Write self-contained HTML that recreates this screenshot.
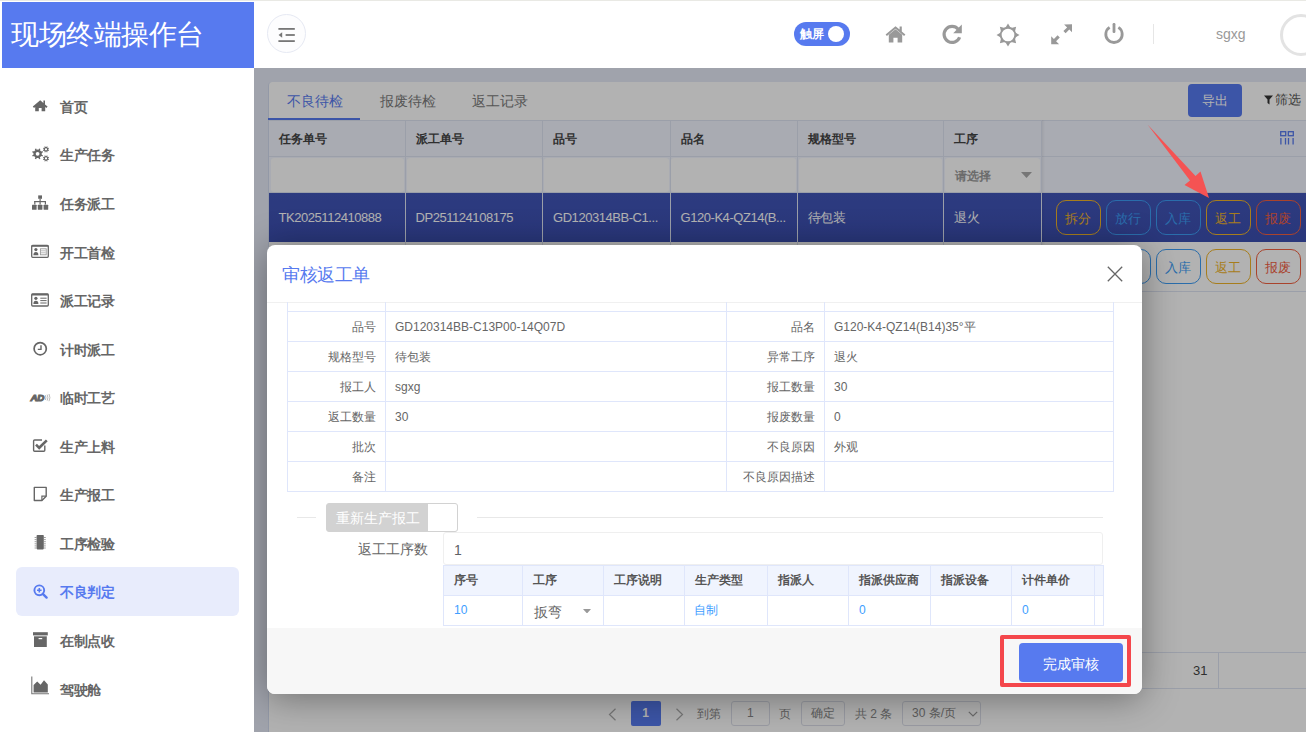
<!DOCTYPE html>
<html><head><meta charset="utf-8">
<style>
*{box-sizing:border-box;margin:0;padding:0}
html,body{width:1306px;height:732px;overflow:hidden;background:#fff;font-family:"Liberation Sans",sans-serif;}
.abs{position:absolute}
#topline{left:0;top:0;width:1306px;height:1px;background:#e9e9e4}
#side{left:0;top:1px;width:254px;height:731px;background:#fff}
#logo{left:2px;top:1px;width:252px;height:66px;background:#577aef;color:#fff;font-size:28px;letter-spacing:-0.5px;line-height:66px;padding-left:9px;white-space:nowrap}
.mi{position:absolute;left:0;width:254px;height:49px;}
.mi .t{position:absolute;left:60px;top:-0.3px;line-height:49px;font-size:14px;letter-spacing:-0.45px;font-weight:bold;color:#666;white-space:nowrap}
.mi svg{position:absolute;left:33px;top:17px}
.mi.on .bg{position:absolute;left:16px;top:-2px;width:223px;height:49px;background:#e8ecfc;border-radius:6px}
.mi.on .t{color:#577aef}
#hdr{left:254px;top:1px;width:1052px;height:67px;background:#fff}
#content{left:254px;top:68px;width:1052px;height:664px;background:#e5eaf7;overflow:hidden}
#mask{left:254px;top:68px;width:1052px;height:664px;background:rgba(0,0,0,0.3)}
.btn{width:45px;height:35px;border:1.3px solid;border-radius:10px;font-size:13px;line-height:35.5px;text-align:center}
.lbl{height:30px;line-height:33px;font-size:12px;color:#666;text-align:right;padding-right:9px;white-space:nowrap}
.val{height:30px;line-height:33px;font-size:12px;color:#666;padding-left:10px;white-space:nowrap}
</style></head>
<body>
<div id="topline" class="abs"></div>
<div id="side" class="abs">
  <div id="logo" class="abs">现场终端操作台</div>
<div class="mi" style="top:82.0px"><div class="t">首页</div></div>
<div class="mi" style="top:130.5px"><div class="t">生产任务</div></div>
<div class="mi" style="top:179.0px"><div class="t">任务派工</div></div>
<div class="mi" style="top:228.0px"><div class="t">开工首检</div></div>
<div class="mi" style="top:276.5px"><div class="t">派工记录</div></div>
<div class="mi" style="top:325.0px"><div class="t">计时派工</div></div>
<div class="mi" style="top:373.5px"><div class="t">临时工艺</div></div>
<div class="mi" style="top:422.2px"><div class="t">生产上料</div></div>
<div class="mi" style="top:470.5px"><div class="t">生产报工</div></div>
<div class="mi" style="top:519.5px"><div class="t">工序检验</div></div>
<div class="mi on" style="top:567.5px"><div class="bg"></div><div class="t">不良判定</div></div>
<div class="mi" style="top:616.5px"><div class="t">在制点收</div></div>
<div class="mi" style="top:665.5px"><div class="t">驾驶舱</div></div>
</div>
<svg class="abs" style="left:0;top:0;z-index:2" width="254" height="732" viewBox="0 0 254 732">
<g fill="#666">
<path d="M40.2 100.3 L32.8 106.6 L34 107.9 L40.2 102.7 L46.4 107.9 L47.6 106.6 L45 104.4 V100.6 H43.4 V103 Z M35.2 106.7 V111.2 H38.8 V108 H41.6 V111.2 H45.2 V106.7 L40.2 102.6 Z"/>
</g>
<g fill="#666" fill-rule="evenodd">
<path d="M41.80 153.80 L41.70 154.72 L43.01 155.24 L42.44 156.61 L41.15 156.05 L40.57 156.77 L39.85 157.35 L40.41 158.64 L39.04 159.21 L38.52 157.90 L37.60 158.00 L36.68 157.90 L36.16 159.21 L34.79 158.64 L35.35 157.35 L34.63 156.77 L34.05 156.05 L32.76 156.61 L32.19 155.24 L33.50 154.72 L33.40 153.80 L33.50 152.88 L32.19 152.36 L32.76 150.99 L34.05 151.55 L34.63 150.83 L35.35 150.25 L34.79 148.96 L36.16 148.39 L36.68 149.70 L37.60 149.60 L38.52 149.70 L39.04 148.39 L40.41 148.96 L39.85 150.25 L40.57 150.83 L41.15 151.55 L42.44 150.99 L43.01 152.36 L41.70 152.88 Z M39.50 153.80 A1.9 1.9 0 1 0 35.70 153.80 A1.9 1.9 0 1 0 39.50 153.80 Z"/>
<path d="M48.30 149.30 L48.24 149.80 L49.09 150.12 L48.77 150.91 L47.94 150.53 L47.63 150.93 L47.23 151.24 L47.61 152.07 L46.82 152.39 L46.50 151.54 L46.00 151.60 L45.50 151.54 L45.18 152.39 L44.39 152.07 L44.77 151.24 L44.37 150.93 L44.06 150.53 L43.23 150.91 L42.91 150.12 L43.76 149.80 L43.70 149.30 L43.76 148.80 L42.91 148.48 L43.23 147.69 L44.06 148.07 L44.37 147.67 L44.77 147.36 L44.39 146.53 L45.18 146.21 L45.50 147.06 L46.00 147.00 L46.50 147.06 L46.82 146.21 L47.61 146.53 L47.23 147.36 L47.63 147.67 L47.94 148.07 L48.77 147.69 L49.09 148.48 L48.24 148.80 Z M47.10 149.30 A1.1 1.1 0 1 0 44.90 149.30 A1.1 1.1 0 1 0 47.10 149.30 Z"/>
<path d="M48.30 158.40 L48.24 158.90 L49.09 159.22 L48.77 160.01 L47.94 159.63 L47.63 160.03 L47.23 160.34 L47.61 161.17 L46.82 161.49 L46.50 160.64 L46.00 160.70 L45.50 160.64 L45.18 161.49 L44.39 161.17 L44.77 160.34 L44.37 160.03 L44.06 159.63 L43.23 160.01 L42.91 159.22 L43.76 158.90 L43.70 158.40 L43.76 157.90 L42.91 157.58 L43.23 156.79 L44.06 157.17 L44.37 156.77 L44.77 156.46 L44.39 155.63 L45.18 155.31 L45.50 156.16 L46.00 156.10 L46.50 156.16 L46.82 155.31 L47.61 155.63 L47.23 156.46 L47.63 156.77 L47.94 157.17 L48.77 156.79 L49.09 157.58 L48.24 157.90 Z M47.10 158.40 A1.1 1.1 0 1 0 44.90 158.40 A1.1 1.1 0 1 0 47.10 158.40 Z"/>
</g>
<g fill="#666">
<rect x="38.2" y="195.4" width="3.8" height="3.4"/><rect x="39.5" y="198.8" width="1.2" height="2.6"/>
<rect x="34.2" y="201" width="11.8" height="1.2"/><rect x="34.2" y="201" width="1.2" height="3.5"/><rect x="39.5" y="201" width="1.2" height="3.5"/><rect x="44.8" y="201" width="1.2" height="3.5"/>
<rect x="32" y="204.8" width="4.6" height="5" rx="0.5"/><rect x="37.8" y="204.8" width="4.6" height="5" rx="0.5"/><rect x="43.6" y="204.8" width="4.6" height="5" rx="0.5"/>
</g>
<g>
<rect x="31.7" y="245.3" width="16.6" height="12" rx="1" fill="none" stroke="#666" stroke-width="1.3"/><rect x="31.7" y="245" width="16.6" height="1.8" fill="#666"/>
<circle cx="35.9" cy="249.6" r="1.6" fill="#666"/><path d="M33.4 255.2 q0-3.2 2.5-3.2 q2.5 0 2.5 3.2z" fill="#666"/>
<rect x="40.4" y="248.8" width="5.8" height="6" fill="none" stroke="#999" stroke-width="0.9"/><path d="M41 250.8 H45.6 M41 252.8 H45.6" stroke="#aaa" stroke-width="0.8"/>
</g>
<g>
<rect x="31.7" y="294" width="16.6" height="12" rx="1" fill="none" stroke="#666" stroke-width="1.3"/><rect x="31.7" y="293.7" width="16.6" height="1.8" fill="#666"/>
<circle cx="35.9" cy="298.3" r="1.6" fill="#666"/><path d="M33.4 303.9 q0-3.2 2.5-3.2 q2.5 0 2.5 3.2z" fill="#666"/>
<path d="M40.3 298.2 H46.6 M40.3 300.6 H46.6 M40.3 303 H46.6" stroke="#666" stroke-width="1"/>
</g>
<g>
<circle cx="40.2" cy="348.7" r="6.1" fill="none" stroke="#666" stroke-width="1.7"/>
<path d="M41 345.2 V349.4 H37.8" fill="none" stroke="#666" stroke-width="1.4"/>
</g>
<g>
<text x="30.6" y="400.8" font-family="Liberation Sans" font-weight="bold" font-style="italic" font-size="9" fill="#666" stroke="#666" stroke-width="1" letter-spacing="-0.3" textLength="13.5" lengthAdjust="spacingAndGlyphs">AD</text>
<path d="M45.4 395.2 q1 2.4 0 4.8 M47.2 394.6 q1.4 3 0 6 M49 394 q1.8 3.6 0 7.2" fill="none" stroke="#aaa" stroke-width="0.8"/>
</g>
<g>
<path d="M44.8 445.5 V450.2 Q44.8 451.2 43.8 451.2 H34.6 Q33.6 451.2 33.6 450.2 V441 Q33.6 440 34.6 440 H42" fill="none" stroke="#666" stroke-width="1.4"/>
<path d="M36 444.6 L39.2 447.8 L46.8 440.4" fill="none" stroke="#666" stroke-width="2.6"/>
</g>
<g>
<path d="M34.3 487.4 H46.2 V496.2 L41.9 500.5 H34.3 Z" fill="none" stroke="#666" stroke-width="1.4" stroke-linejoin="round"/>
<path d="M41.9 500.5 V496.2 H46.2" fill="none" stroke="#666" stroke-width="1.2"/>
</g>
<g fill="#666">
<rect x="36.6" y="535" width="7.2" height="14.4" rx="0.8"/>
<path d="M34.6 537.5 h2 M34.6 539.6 h2 M34.6 541.7 h2 M34.6 543.8 h2 M34.6 545.9 h2 M34.6 548 h2 M43.8 537.5 h2 M43.8 539.6 h2 M43.8 541.7 h2 M43.8 543.8 h2 M43.8 545.9 h2 M43.8 548 h2" stroke="#888" stroke-width="0.8"/>
</g>
<g>
<circle cx="39.3" cy="590.3" r="4.9" fill="none" stroke="#577aef" stroke-width="1.9"/><path d="M42.8 593.8 L46.6 597.6" stroke="#577aef" stroke-width="2.4" stroke-linecap="round"/><path d="M39.3 588 V592.6 M37 590.3 H41.6" stroke="#577aef" stroke-width="1.6"/>
</g>
<g fill="#666">
<rect x="33" y="632.2" width="14.8" height="3.2"/><path d="M34 636.3 H46.8 V647 H34 Z"/><rect x="38.6" y="638" width="3.6" height="1.2" fill="#fff"/>
</g>
<g>
<path d="M31.8 676.5 V693.8 H49" fill="none" stroke="#777" stroke-width="1.1"/>
<path d="M33.6 692.4 V685 L37.2 681.6 L40.6 684.8 L44 680.2 L47.8 684.5 V692.4 Z" fill="#666"/>
</g>
</svg>
<div id="hdr" class="abs">
  <div class="abs" style="left:13px;top:13px;width:39px;height:39px;border:1px solid #e6e9f3;border-radius:50%;background:#fdfdfe"></div>
  <svg class="abs" style="left:24px;top:26px" width="18" height="15" viewBox="0 0 18 15"><g fill="#777"><rect x="0.4" y="1" width="16.4" height="1.8"/><rect x="7.6" y="7.1" width="9.2" height="1.8"/><rect x="0.4" y="13.2" width="16.4" height="1.8"/><path d="M0.6 8 L4.2 5.3 V10.7 Z"/></g></svg>
  <div class="abs" style="left:540px;top:21px;width:56px;height:24px;background:#577aef;border-radius:12px"></div>
  <div class="abs" style="left:546px;top:21px;line-height:24px;font-size:12px;font-weight:bold;color:#fff">触屏</div>
  <div class="abs" style="left:574px;top:24.8px;width:16px;height:16px;background:#fff;border-radius:50%"></div>
  <svg class="abs" style="left:631px;top:23px" width="21" height="19" viewBox="0 0 21 19"><path fill="#999" d="M10.5 2.2 L0.6 10.4 L1.9 11.9 L10.5 4.8 L19.1 11.9 L20.4 10.4 L16.8 7.4 V2.4 H14.6 V5.6 Z M3.8 10.8 V18.6 H8.4 V13.8 H12.6 V18.6 H17.2 V10.8 L10.5 5.3 Z"/></svg>
  <svg class="abs" style="left:687px;top:22px" width="22" height="22" viewBox="0 0 22 22"><path d="M17.2 6.2 A8 8 0 1 0 18.6 14.2" fill="none" stroke="#999" stroke-width="3.2"/><path d="M20.8 1.6 V10.2 H12.2 Z" fill="#999"/></svg>
  <svg class="abs" style="left:742px;top:21.5px" width="24" height="24" viewBox="0 0 24 24"><path fill="#999" d="M12.00 0.50 L14.60 4.80 L9.40 4.80 Z M20.13 3.87 L18.93 8.75 L15.25 5.07 Z M23.50 12.00 L19.20 14.60 L19.20 9.40 Z M20.13 20.13 L15.25 18.93 L18.93 15.25 Z M12.00 23.50 L9.40 19.20 L14.60 19.20 Z M3.87 20.13 L5.07 15.25 L8.75 18.93 Z M0.50 12.00 L4.80 9.40 L4.80 14.60 Z M3.87 3.87 L8.75 5.07 L5.07 8.75 Z"/><circle cx="12" cy="12" r="7.3" fill="none" stroke="#999" stroke-width="1.9"/></svg>
  <svg class="abs" style="left:796.5px;top:23px" width="22" height="21" viewBox="0 0 22 21"><g fill="#999"><path d="M21 0.3 V8.3 L18.3 5.6 L14.6 9.3 L12.4 7.1 L16.1 3.4 L13.1 0.4 Z"/><path d="M0.2 20.3 V12.3 L2.9 15 L6.6 11.3 L8.8 13.5 L5.1 17.2 L8.1 20.2 Z"/></g></svg>
  <svg class="abs" style="left:849px;top:21px" width="22" height="23" viewBox="0 0 22 23"><path d="M6.6 5.4 A8.2 8.2 0 1 0 15.4 5.4" fill="none" stroke="#999" stroke-width="2.8"/><rect x="9.6" y="1" width="2.8" height="10" rx="1.2" fill="#999"/></svg>
  <div class="abs" style="left:898.5px;top:23px;width:1.5px;height:19.5px;background:#e6e6e6"></div>
  <div class="abs" style="left:962px;top:23px;line-height:20px;font-size:14px;color:#999">sgxg</div>
  <div class="abs" style="left:1025.5px;top:13px;width:42px;height:42px;border:3px solid #e3e3e3;border-radius:50%"></div>
</div>
<div id="content" class="abs">
<div class="abs" style="left:14px;top:13.5px;width:1100px;height:700px;background:#fff;border-radius:4px;border-left:1px solid #d3dbf0"></div>
<div class="abs" style="left:33px;top:24px;line-height:20px;font-size:13.6px;color:#577aef;white-space:nowrap">不良待检</div>
<div class="abs" style="left:125.5px;top:24px;line-height:20px;font-size:13.6px;color:#7a7a7a;white-space:nowrap">报废待检</div>
<div class="abs" style="left:217.5px;top:24px;line-height:20px;font-size:13.6px;color:#7a7a7a;white-space:nowrap">返工记录</div>
<div class="abs" style="left:14px;top:50px;width:92px;height:2px;background:#577aef"></div>
<div class="abs" style="left:933.5px;top:15.5px;width:54.5px;height:33px;background:#577aef;border-radius:4px;color:#fff;font-size:13px;line-height:33px;text-align:center">导出</div>
<svg class="abs" style="left:1009.5px;top:27px" width="9" height="10" viewBox="0 0 9 10"><path d="M0 0.5 H9 L5.5 4.5 V9.5 L3.5 8 V4.5 Z" fill="#333"/></svg>
<div class="abs" style="left:1021px;top:22px;line-height:20px;font-size:13px;color:#555">筛选</div>
<div class="abs" style="left:15px;top:52px;width:1040px;height:36.5px;background:#f2f5ff;border-top:1px solid #dfe4f3;border-bottom:1px solid #dfe4f3"></div>
<div class="abs" style="left:15px;top:88.5px;width:1040px;height:35.5px;background:#f2f5ff"></div>
<div class="abs" style="left:16.5px;top:89.6px;width:133.5px;height:34px;background:#fff;border-radius:3px"></div>
<div class="abs" style="left:152.5px;top:89.6px;width:135.0px;height:34px;background:#fff;border-radius:3px"></div>
<div class="abs" style="left:290.0px;top:89.6px;width:124.5px;height:34px;background:#fff;border-radius:3px"></div>
<div class="abs" style="left:417.0px;top:89.6px;width:125.0px;height:34px;background:#fff;border-radius:3px"></div>
<div class="abs" style="left:544.5px;top:89.6px;width:143.5px;height:34px;background:#fff;border-radius:3px"></div>
<div class="abs" style="left:690.5px;top:89.6px;width:95.5px;height:34px;background:#fff;border-radius:3px"></div>
<div class="abs" style="left:15px;top:124px;width:1040px;height:1px;background:#dfe4f3"></div>
<div class="abs" style="left:15px;top:124.7px;width:1040px;height:49.3px;background:linear-gradient(#4155b8,#3c4fb0)"></div>
<div class="abs" style="left:15px;top:223px;width:1040px;height:1px;background:#dfe4f3"></div>
<div class="abs" style="left:151px;top:52px;width:1px;height:172px;background:#dfe4f3"></div>
<div class="abs" style="left:288px;top:52px;width:1px;height:172px;background:#dfe4f3"></div>
<div class="abs" style="left:415.5px;top:52px;width:1px;height:172px;background:#dfe4f3"></div>
<div class="abs" style="left:543px;top:52px;width:1px;height:172px;background:#dfe4f3"></div>
<div class="abs" style="left:689px;top:52px;width:1px;height:172px;background:#dfe4f3"></div>
<div class="abs" style="left:787px;top:52px;width:1px;height:172px;background:#dfe4f3"></div>
<div class="abs" style="left:788px;top:52px;width:3px;height:172px;background:linear-gradient(90deg,rgba(0,0,0,0.06),rgba(0,0,0,0))"></div>
<div class="abs" style="left:25px;top:60.5px;line-height:20px;font-size:12px;font-weight:bold;color:#444">任务单号</div>
<div class="abs" style="left:161.5px;top:60.5px;line-height:20px;font-size:12px;font-weight:bold;color:#444">派工单号</div>
<div class="abs" style="left:299.0px;top:60.5px;line-height:20px;font-size:12px;font-weight:bold;color:#444">品号</div>
<div class="abs" style="left:426.5px;top:60.5px;line-height:20px;font-size:12px;font-weight:bold;color:#444">品名</div>
<div class="abs" style="left:553.5px;top:60.5px;line-height:20px;font-size:12px;font-weight:bold;color:#444">规格型号</div>
<div class="abs" style="left:700.0px;top:60.5px;line-height:20px;font-size:12px;font-weight:bold;color:#444">工序</div>
<svg class="abs" style="left:1025.5px;top:62.5px" width="14" height="14" viewBox="0 0 14 14"><g fill="none" stroke="#577aef" stroke-width="1.3"><rect x="0.7" y="0.7" width="5" height="4"/><rect x="8.3" y="0.7" width="5" height="4"/><path d="M0.9 7 V13.4 M5.5 7 V13.4 M8.5 7 V13.4 M13.1 7 V13.4"/></g></svg>
<div class="abs" style="left:701px;top:98px;line-height:20px;font-size:12px;font-weight:bold;color:#9a9a9a">请选择</div>
<svg class="abs" style="left:767px;top:104px" width="11" height="6" viewBox="0 0 11 6"><path d="M0 0 H11 L5.5 6 Z" fill="#aaa"/></svg>
<div class="abs" style="left:24.5px;top:139.5px;line-height:20px;font-size:13px;color:#fff;white-space:nowrap;letter-spacing:-0.45px">TK2025112410888</div>
<div class="abs" style="left:161.5px;top:139.5px;line-height:20px;font-size:13px;color:#fff;white-space:nowrap;letter-spacing:-0.45px">DP251124108175</div>
<div class="abs" style="left:299.0px;top:139.5px;line-height:20px;font-size:13px;color:#fff;white-space:nowrap;letter-spacing:-0.45px">GD120314BB-C1...</div>
<div class="abs" style="left:426.5px;top:139.5px;line-height:20px;font-size:13px;color:#fff;white-space:nowrap;letter-spacing:-0.45px">G120-K4-QZ14(B...</div>
<div class="abs" style="left:553.5px;top:139.5px;line-height:20px;font-size:13px;color:#fff;white-space:nowrap;letter-spacing:-0.45px">待包装</div>
<div class="abs" style="left:700.0px;top:139.5px;line-height:20px;font-size:13px;color:#fff;white-space:nowrap;letter-spacing:-0.45px">退火</div>
<div class="abs btn" style="left:801.8px;top:131.5px;border-color:#f0b429;color:#f0b429">拆分</div>
<div class="abs btn" style="left:801.8px;top:181.3px;border-color:#f0b429;color:#f0b429">拆分</div>
<div class="abs btn" style="left:851.8px;top:131.5px;border-color:#3d9df5;color:#3d9df5">放行</div>
<div class="abs btn" style="left:851.8px;top:181.3px;border-color:#3d9df5;color:#3d9df5">放行</div>
<div class="abs btn" style="left:901.8px;top:131.5px;border-color:#3d9df5;color:#3d9df5">入库</div>
<div class="abs btn" style="left:901.8px;top:181.3px;border-color:#3d9df5;color:#3d9df5">入库</div>
<div class="abs btn" style="left:951.8px;top:131.5px;border-color:#f0b429;color:#f0b429">返工</div>
<div class="abs btn" style="left:951.8px;top:181.3px;border-color:#f0b429;color:#f0b429">返工</div>
<div class="abs btn" style="left:1001.8px;top:131.5px;border-color:#f2603f;color:#f2603f">报废</div>
<div class="abs btn" style="left:1001.8px;top:181.3px;border-color:#f2603f;color:#f2603f">报废</div>
<div class="abs" style="left:15px;top:584px;width:1040px;height:36.5px;border-top:1px solid #dfe4f3;border-bottom:1px solid #dfe4f3"></div>
<div class="abs" style="left:964px;top:584px;width:1px;height:36px;background:#dfe4f3"></div>
<div class="abs" style="left:906px;top:593px;width:47.5px;text-align:right;line-height:20px;font-size:13px;color:#444">31</div>
<svg class="abs" style="left:354px;top:639.5px" width="9" height="13" viewBox="0 0 9 13"><path d="M7.5 0.7 L1.5 6.5 L7.5 12.3" fill="none" stroke="#aaa" stroke-width="1.2"/></svg>
<div class="abs" style="left:376.5px;top:632.5px;width:30px;height:25.5px;background:#577aef;border-radius:2px;color:#fff;font-size:12px;font-weight:bold;line-height:25.5px;text-align:center">1</div>
<svg class="abs" style="left:420.5px;top:639.5px" width="9" height="13" viewBox="0 0 9 13"><path d="M1.5 0.7 L7.5 6.5 L1.5 12.3" fill="none" stroke="#aaa" stroke-width="1.2"/></svg>
<div class="abs" style="left:443px;top:635.5px;line-height:20px;font-size:12px;color:#888">到第</div>
<div class="abs" style="left:477px;top:632.5px;width:38.5px;height:25.5px;border:1px solid #dcdfea;border-radius:3px;color:#888;font-size:12px;line-height:23.5px;text-align:center">1</div>
<div class="abs" style="left:525px;top:635.5px;line-height:20px;font-size:12px;color:#888">页</div>
<div class="abs" style="left:547px;top:632.5px;width:44px;height:25.5px;border:1px solid #dcdfea;border-radius:3px;color:#888;font-size:12px;line-height:23.5px;text-align:center">确定</div>
<div class="abs" style="left:601px;top:635.5px;line-height:20px;font-size:12px;color:#888;white-space:nowrap">共 2 条</div>
<div class="abs" style="left:648px;top:632.5px;width:79px;height:25.5px;border:1px solid #dcdfea;border-radius:3px;color:#888;font-size:12px;line-height:23.5px;padding-left:9px;white-space:nowrap">30 条/页</div>
<svg class="abs" style="left:714px;top:643px" width="10" height="6" viewBox="0 0 10 6"><path d="M0.8 0.8 L5 5 L9.2 0.8" fill="none" stroke="#999" stroke-width="1.2"/></svg>
</div>
<div id="ov" class="abs" style="left:254px;top:68px;width:1052px;height:664px;overflow:hidden"><div class="abs" style="left:0;top:0;width:1052px;height:664px;background:rgba(0,0,0,0.3)"></div>
<div id="modal" class="abs" style="left:13px;top:177px;width:875px;height:449px;background:#fff;border-radius:8px;box-shadow:0 4px 36px rgba(0,0,0,0.38)"><div class="abs" style="left:15.2px;top:17.8px;line-height:24px;font-size:18px;letter-spacing:-0.45px;color:#577aef;white-space:nowrap">审核返工单</div>
<svg class="abs" style="left:839.5px;top:20.5px" width="16" height="16" viewBox="0 0 16 16"><path d="M0.8 0.8 L15.2 15.2 M15.2 0.8 L0.8 15.2" stroke="#666" stroke-width="1.3"/></svg>
<div class="abs" style="left:0;top:56.5px;width:875px;height:1px;background:#f0f0f0"></div>
<div class="abs" style="left:0;top:57px;width:875px;height:326px;overflow:hidden"><div class="abs" style="left:20px;top:-21px;width:1px;height:211px;background:#dfe6fb"></div>
<div class="abs" style="left:118px;top:-21px;width:1px;height:211px;background:#dfe6fb"></div>
<div class="abs" style="left:459px;top:-21px;width:1px;height:211px;background:#dfe6fb"></div>
<div class="abs" style="left:557px;top:-21px;width:1px;height:211px;background:#dfe6fb"></div>
<div class="abs" style="left:846px;top:-21px;width:1px;height:211px;background:#dfe6fb"></div>
<div class="abs" style="left:20px;top:9px;width:827px;height:1px;background:#dfe6fb"></div>
<div class="abs" style="left:20px;top:39px;width:827px;height:1px;background:#dfe6fb"></div>
<div class="abs" style="left:20px;top:69px;width:827px;height:1px;background:#dfe6fb"></div>
<div class="abs" style="left:20px;top:99px;width:827px;height:1px;background:#dfe6fb"></div>
<div class="abs" style="left:20px;top:129px;width:827px;height:1px;background:#dfe6fb"></div>
<div class="abs" style="left:20px;top:159px;width:827px;height:1px;background:#dfe6fb"></div>
<div class="abs" style="left:20px;top:189px;width:827px;height:1px;background:#dfe6fb"></div>
<div class="abs lbl" style="left:20px;top:9px;width:98px">品号</div>
<div class="abs val" style="left:118px;top:9px">GD120314BB-C13P00-14Q07D</div>
<div class="abs lbl" style="left:459px;top:9px;width:98px">品名</div>
<div class="abs val" style="left:557px;top:9px">G120-K4-QZ14(B14)35°平</div>
<div class="abs lbl" style="left:20px;top:39px;width:98px">规格型号</div>
<div class="abs val" style="left:118px;top:39px">待包装</div>
<div class="abs lbl" style="left:459px;top:39px;width:98px">异常工序</div>
<div class="abs val" style="left:557px;top:39px">退火</div>
<div class="abs lbl" style="left:20px;top:69px;width:98px">报工人</div>
<div class="abs val" style="left:118px;top:69px">sgxg</div>
<div class="abs lbl" style="left:459px;top:69px;width:98px">报工数量</div>
<div class="abs val" style="left:557px;top:69px">30</div>
<div class="abs lbl" style="left:20px;top:99px;width:98px">返工数量</div>
<div class="abs val" style="left:118px;top:99px">30</div>
<div class="abs lbl" style="left:459px;top:99px;width:98px">报废数量</div>
<div class="abs val" style="left:557px;top:99px">0</div>
<div class="abs lbl" style="left:20px;top:129px;width:98px">批次</div>
<div class="abs val" style="left:118px;top:129px"></div>
<div class="abs lbl" style="left:459px;top:129px;width:98px">不良原因</div>
<div class="abs val" style="left:557px;top:129px">外观</div>
<div class="abs lbl" style="left:20px;top:159px;width:98px">备注</div>
<div class="abs val" style="left:118px;top:159px"></div>
<div class="abs lbl" style="left:459px;top:159px;width:98px">不良原因描述</div>
<div class="abs val" style="left:557px;top:159px"></div>
<div class="abs" style="left:29.5px;top:215px;width:19px;height:1px;background:#e8e8e8"></div>
<div class="abs" style="left:210px;top:215px;width:626px;height:1px;background:#e8e8e8"></div>
<div class="abs" style="left:58.5px;top:201px;width:132px;height:28.5px;background:#d2d2d2;border-radius:3px;border:1px solid #d2d2d2"></div>
<div class="abs" style="left:161px;top:202px;width:28.5px;height:26.5px;background:#fff;border-radius:0 2px 2px 0"></div>
<div class="abs" style="left:69px;top:205.5px;line-height:20px;font-size:14px;color:#fff;white-space:nowrap">重新生产报工</div>
<div class="abs" style="left:73px;top:237px;width:88px;text-align:right;line-height:20px;font-size:14px;color:#666;white-space:nowrap">返工工序数</div>
<div class="abs" style="left:175.5px;top:230px;width:660.5px;height:32.5px;border:1px solid #efefef;border-radius:3px"></div>
<div class="abs" style="left:187px;top:237.5px;line-height:20px;font-size:14px;color:#606266">1</div>
<div class="abs" style="left:175.5px;top:262.5px;width:660.5px;height:30px;background:#f0f4fe"></div>
<div class="abs" style="left:175.5px;top:262.5px;width:660.5px;height:1px;background:#dfe6fb"></div>
<div class="abs" style="left:175.5px;top:292.5px;width:660.5px;height:1px;background:#dfe6fb"></div>
<div class="abs" style="left:175.5px;top:322.5px;width:660.5px;height:1px;background:#dfe6fb"></div>
<div class="abs" style="left:175.5px;top:262.5px;width:1px;height:61px;background:#dfe6fb"></div>
<div class="abs" style="left:254.5px;top:262.5px;width:1px;height:61px;background:#dfe6fb"></div>
<div class="abs" style="left:335.5px;top:262.5px;width:1px;height:61px;background:#dfe6fb"></div>
<div class="abs" style="left:417px;top:262.5px;width:1px;height:61px;background:#dfe6fb"></div>
<div class="abs" style="left:499.5px;top:262.5px;width:1px;height:61px;background:#dfe6fb"></div>
<div class="abs" style="left:580.5px;top:262.5px;width:1px;height:61px;background:#dfe6fb"></div>
<div class="abs" style="left:662.5px;top:262.5px;width:1px;height:61px;background:#dfe6fb"></div>
<div class="abs" style="left:743.5px;top:262.5px;width:1px;height:61px;background:#dfe6fb"></div>
<div class="abs" style="left:826.5px;top:262.5px;width:1px;height:61px;background:#dfe6fb"></div>
<div class="abs" style="left:836px;top:262.5px;width:1px;height:61px;background:#dfe6fb"></div>
<div class="abs" style="left:186.5px;top:267.5px;line-height:20px;font-size:12px;font-weight:bold;color:#555;white-space:nowrap">序号</div>
<div class="abs" style="left:265.5px;top:267.5px;line-height:20px;font-size:12px;font-weight:bold;color:#555;white-space:nowrap">工序</div>
<div class="abs" style="left:346.5px;top:267.5px;line-height:20px;font-size:12px;font-weight:bold;color:#555;white-space:nowrap">工序说明</div>
<div class="abs" style="left:428px;top:267.5px;line-height:20px;font-size:12px;font-weight:bold;color:#555;white-space:nowrap">生产类型</div>
<div class="abs" style="left:510.5px;top:267.5px;line-height:20px;font-size:12px;font-weight:bold;color:#555;white-space:nowrap">指派人</div>
<div class="abs" style="left:591.5px;top:267.5px;line-height:20px;font-size:12px;font-weight:bold;color:#555;white-space:nowrap">指派供应商</div>
<div class="abs" style="left:673.5px;top:267.5px;line-height:20px;font-size:12px;font-weight:bold;color:#555;white-space:nowrap">指派设备</div>
<div class="abs" style="left:754.5px;top:267.5px;line-height:20px;font-size:12px;font-weight:bold;color:#555;white-space:nowrap">计件单价</div>
<div class="abs" style="left:187.0px;top:297.5px;line-height:20px;font-size:12px;color:#409eff;white-space:nowrap">10</div>
<div class="abs" style="left:427px;top:297.5px;line-height:20px;font-size:12px;color:#409eff;white-space:nowrap">自制</div>
<div class="abs" style="left:592.0px;top:297.5px;line-height:20px;font-size:12px;color:#409eff;white-space:nowrap">0</div>
<div class="abs" style="left:755.0px;top:297.5px;line-height:20px;font-size:12px;color:#409eff;white-space:nowrap">0</div>
<div class="abs" style="left:255.5px;top:293.5px;width:79px;height:29px;background:#fff"></div>
<div class="abs" style="left:267px;top:300px;line-height:20px;font-size:14px;color:#666">扳弯</div>
<svg class="abs" style="left:316px;top:306.5px" width="8" height="4.5" viewBox="0 0 8 4.5"><path d="M0 0 H8 L4 4.5 Z" fill="#999"/></svg></div>
<div class="abs" style="left:0;top:383px;width:875px;height:66px;background:#f7f7f7;border-radius:0 0 8px 8px"></div>
<div class="abs" style="left:751.5px;top:398px;width:104.5px;height:39px;background:#577aef;border-radius:4px;color:#fff;font-size:14px;line-height:42px;text-align:center">完成审核</div></div>
</div>

<div class="abs" style="left:1000px;top:635.3px;width:130.5px;height:51.5px;border:4px solid #f4474c;border-radius:2px"></div>
<svg class="abs" style="left:0;top:0" width="1306" height="732" viewBox="0 0 1306 732"><path d="M1147.5 124.5 L1195.5 176 L1200.5 171.5 L1209 198 L1184.5 185 L1190 180.5 Z" fill="#f55353"/></svg>
</body></html>
